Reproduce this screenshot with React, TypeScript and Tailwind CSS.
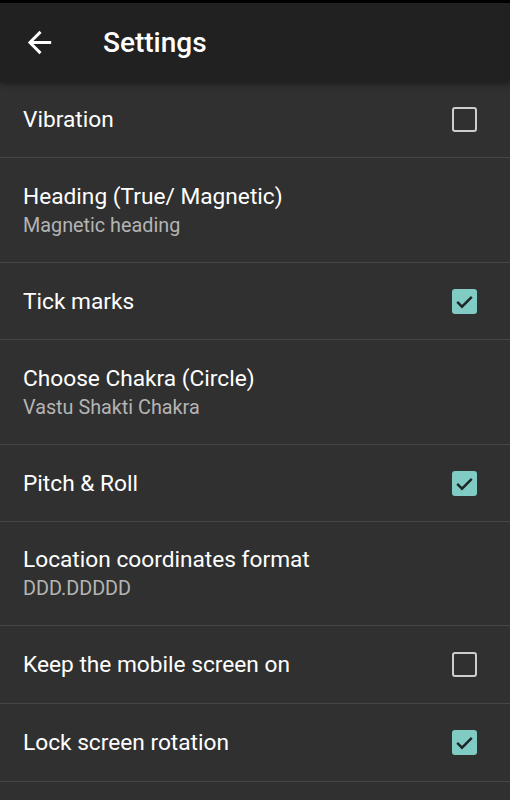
import React from "react";

interface Pref {
  title: string;
  summary?: string;
  checkbox?: boolean;
  checked?: boolean;
  h: string;
}

const PREFS: Pref[] = [
  { title: "Vibration", checkbox: true, checked: false, h: "h-[76px]" },
  { title: "Heading (True/ Magnetic)", summary: "Magnetic heading", h: "h-[105px]" },
  { title: "Tick marks", checkbox: true, checked: true, h: "h-[77px]" },
  { title: "Choose Chakra (Circle)", summary: "Vastu Shakti Chakra", h: "h-[105px]" },
  { title: "Pitch & Roll", checkbox: true, checked: true, h: "h-[77px]" },
  { title: "Location coordinates format", summary: "DDD.DDDDD", h: "h-[104px]" },
  { title: "Keep the mobile screen on", checkbox: true, checked: false, h: "h-[78px]" },
  { title: "Lock screen rotation", checkbox: true, checked: true, h: "h-[78px]" },
];

function CheckBox({ checked }: { checked?: boolean }) {
  if (checked) {
    return (
      <div className="flex h-[25px] w-[25px] items-center justify-center rounded-[3px] bg-[#80cbc4]">
        <svg viewBox="0 0 24 24" className="h-[25px] w-[25px]">
          <path
            d="M5 12.4l4.6 4.6 9.4-9.4"
            fill="none"
            stroke="#1c2626"
            strokeWidth="2.3"
          />
        </svg>
      </div>
    );
  }
  return (
    <div className="h-[25px] w-[25px] rounded-[3px] border-[2.5px] border-[#cdcdcd]" />
  );
}

export default function App() {
  return (
    <div
      className="flex h-[800px] w-[510px] flex-col overflow-hidden bg-[#303030]"
      style={{ fontFamily: "Roboto, 'Noto Sans', sans-serif" }}
    >
      {/* Status strip + toolbar */}
      <div className="h-[3px] shrink-0 bg-black" />
      <header className="relative z-10 flex h-[79px] shrink-0 items-center bg-[#212121] shadow-[0_2px_6px_rgba(0,0,0,0.45)]">
        <svg viewBox="0 0 24 24" className="ml-[22px] h-[35px] w-[35px]" fill="#ffffff">
          <path d="M20 11H7.83l5.59-5.59L12 4l-8 8 8 8 1.41-1.41L7.83 13H20v-2z" />
        </svg>
        <h1 className="ml-[46px] text-[28px] font-medium leading-none text-white">
          Settings
        </h1>
      </header>

      {/* Preference list */}
      <div className="flex flex-col">
        {PREFS.map((p) => (
          <div
            key={p.title}
            className={`flex ${p.h} shrink-0 items-center border-b border-[#464646] pl-[23px] pr-[33px]`}
          >
            <div className="flex flex-1 flex-col pt-[1px]">
              <span className="text-[22.7px] leading-[30px] text-white">{p.title}</span>
              {p.summary && (
                <span className="text-[19.8px] leading-[28px] text-[#b4b4b4]">
                  {p.summary}
                </span>
              )}
            </div>
            {p.checkbox && <CheckBox checked={p.checked} />}
          </div>
        ))}
      </div>
    </div>
  );
}
